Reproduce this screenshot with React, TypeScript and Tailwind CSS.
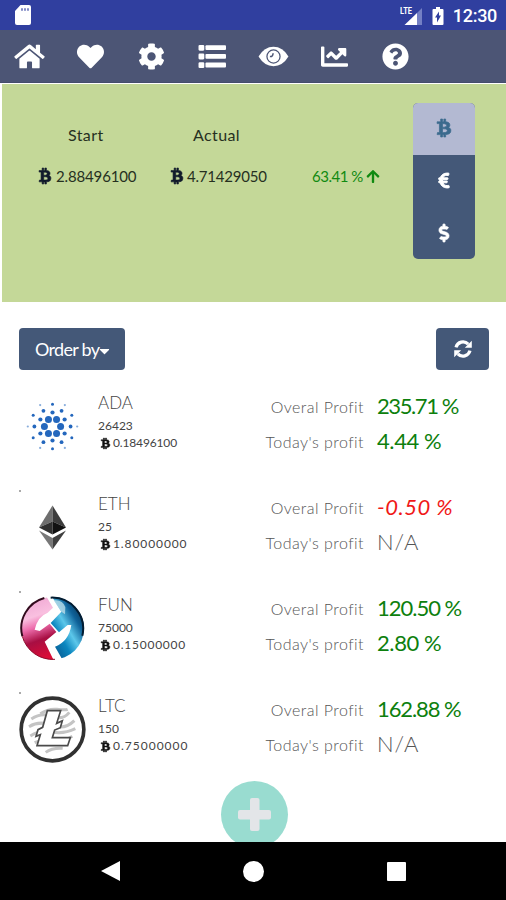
import React from 'react';
import {
  FaArrowUp,
  FaBtc,
  FaCaretDown,
  FaChartLine,
  FaCog,
  FaDollarSign,
  FaEuroSign,
  FaHeart,
  FaHome,
  FaQuestionCircle,
} from 'react-icons/fa';
import clsx from 'clsx';

type IconProps = { className?: string };

const ListIcon = ({ className }: IconProps) => (
  <svg className={className} viewBox="0 0 31 28" fill="currentColor">
    {[2, 11, 20].map((y) => (
      <g key={y}>
        <rect x="1" y={y} width="6" height="6" rx="1.2" />
        <rect x="8.2" y={y + 0.3} width="21.300" height="5" rx="1" />
      </g>
    ))}
  </svg>
);

const EyeIcon = ({ className }: IconProps) => (
  <svg className={className} viewBox="0 0 31 28">
    <path d="M0 14Q6 4 15.500 4T31 14Q25 24 15.500 24T0 14z" fill="currentColor" />
    <circle cx="15.500" cy="14" r="6.800" fill="none" stroke="#4c5575" strokeWidth="1.300" />
    <path d="M11.800 14q2.900.6 3.300-3.400" fill="none" stroke="#4c5575" strokeWidth="1.600" />
  </svg>
);

const RefreshIcon = ({ className }: IconProps) => (
  <svg className={className} viewBox="0 0 18 18" fill="none">
    <path d="M2 7.300A7.200 7.200 0 0 1 14.200 4.200M16 10.700A7.200 7.200 0 0 1 3.800 13.800" stroke="currentColor" strokeWidth="3.200" />
    <path d="M17.800.8V7.800H10.800zM.2 17.200V10.200H7.200z" fill="currentColor" />
  </svg>
);

const navIcons = [FaHome, FaHeart, FaCog, ListIcon, EyeIcon, FaChartLine, FaQuestionCircle];

const StatusBar = () => (
  <div className="h-[30px] bg-[#303f9f] flex items-center justify-between pl-[14px] pr-[9px] text-white">
    <svg className="w-[18px] h-[20px]" viewBox="0 0 18 20" fill="currentColor">
      <path d="M6.5 0H15a2 2 0 0 1 2 2v16a2 2 0 0 1-2 2H3a2 2 0 0 1-2-2V6z" />
      <path d="M8 3.2v2.5M11 3.2v2.5M14 3.2v2.5" stroke="#303f9f" strokeWidth="1.2" />
    </svg>
    <div className="flex items-center pt-px">
      <svg className="w-[22px] h-[20px]" viewBox="0 0 22 20">
        <path d="M22 2v17h-5V7z" fill="#7480c4" />
        <path d="M17 7v12H4.500z" fill="white" />
        <text x="0" y="8" fontSize="9" fontWeight="700" fill="white" textLength="12" lengthAdjust="spacingAndGlyphs" fontFamily="Roboto, sans-serif">LTE</text>
      </svg>
      <svg className="w-[12px] h-[20px] ml-[10px]" viewBox="0 0 12 20">
        <path d="M4 1h4v2h2.500q1 0 1 1v14q0 1-1 1h-9q-1 0-1-1V4q0-1 1-1H4z" fill="white" />
        <path d="M7 5.500v4h2L5 16.500v-5H3z" fill="#303f9f" />
      </svg>
      <span className="ml-[9px] text-[18px] leading-none font-medium font-['Roboto',sans-serif] tracking-[-0.300px]">12:30</span>
    </div>
  </div>
);

const NavBar = () => (
  <nav className="h-[53px] bg-[#4c5575] border-b border-[#454d6c] flex items-center text-white">
    {navIcons.map((Icon, i) => (
      <div key={i} className="w-[61px] shrink-0 flex justify-center pr-[2px]">
        <Icon className="w-[31px] h-[27px]" />
      </div>
    ))}
  </nav>
);

const Btc = ({ className }: IconProps) => (
  <FaBtc className={clsx('shrink-0 overflow-visible stroke-current [stroke-width:20]', className)} preserveAspectRatio="none" />
);

const Summary = () => (
  <section className="mt-px ml-[2px] h-[218px] bg-[#c4d898] flex text-[#26301f] text-[15px]">
    <div className="pl-[37px] pt-[41px] w-[132px] shrink-0 flex flex-col">
      <span className="leading-5 pl-[29px] text-[16px] tracking-[0.400px]">Start</span>
      <span className="mt-[21px] leading-5 flex items-center whitespace-nowrap">
        <Btc className="w-[12px] h-[16px] mr-[5px] text-[#111a2b]" />
        <span className="tracking-[-0.150px]">2.88496100</span>
      </span>
    </div>
    <div className="pl-[37px] pt-[41px] w-[142px] shrink-0 flex flex-col">
      <span className="leading-5 pl-[22px] text-[16px] tracking-[0.400px]">Actual</span>
      <span className="mt-[21px] leading-5 flex items-center whitespace-nowrap">
        <Btc className="w-[12px] h-[16px] mr-[4px] text-[#111a2b]" />
        <span className="tracking-[-0.200px]">4.71429050</span>
      </span>
    </div>
    <div className="pl-[36px] pt-[82px] w-[137px] shrink-0">
      <span className="leading-5 flex items-center text-[#118a11] whitespace-nowrap">
        <span className="tracking-[-0.500px]">63.41 %</span>
        <FaArrowUp className="w-[14px] h-[15px] ml-[3px] shrink-0" />
      </span>
    </div>
    <div className="mt-[19px] w-[62px] h-[156px] shrink-0 rounded-[5px] overflow-hidden bg-[#445878] text-white flex flex-col">
      <button className="h-[52px] bg-[#b3b9d2] text-[#3b6a8d] flex items-center justify-center pb-[2px]">
        <Btc className="w-[14px] h-[18px]" />
      </button>
      <button className="h-[52px] flex items-center justify-center pb-[2px]">
        <FaEuroSign className="w-[16px] h-[17px] overflow-visible stroke-current [stroke-width:30]" />
      </button>
      <button className="h-[52px] flex items-center justify-center pb-px">
        <FaDollarSign className="w-[16px] h-[18px] overflow-visible stroke-current [stroke-width:20]" />
      </button>
    </div>
  </section>
);

// rings of the Cardano mark: radius, dot size, start angle
const adaRings = [
  [8.1, 3.5, 0],
  [14, 2.1, 30],
  [18.1, 1.9, 0],
  [22.3, 1.5, 30],
  [24.7, 1.1, 0],
];

const AdaLogo = () => (
  <svg className="w-[67px] h-[67px]" viewBox="-33.500 -33.500 67 67" fill="#2467bd">
    {adaRings.map(([radius, dot, start]) =>
      [0, 60, 120, 180, 240, 300].map((a) => {
        const t = ((a + start) * Math.PI) / 180;
        return <circle key={`${radius}-${a}`} cx={radius * Math.cos(t)} cy={radius * Math.sin(t)} r={dot} opacity={dot < 1.2 ? 0.55 : 1} />;
      })
    )}
  </svg>
);

const EthLogo = () => (
  <svg className="w-[67px] h-[67px]" viewBox="-33.500 -33.500 67 67">
    <path d="M0-22-13.500 0 0-6z" fill="#6e6e6e" />
    <path d="M0-22 13.500 0 0-6z" fill="#3c3c3c" />
    <path d="M0-6-13.500 0 0 7z" fill="#303030" />
    <path d="M0-6 13.500 0 0 7z" fill="#111" />
    <path d="M-13.500 3 0 10.500V22z" fill="#777" />
    <path d="M13.500 3 0 10.500V22z" fill="#3f3f3f" />
  </svg>
);

const FunLogo = () => (
  <svg className="w-[67px] h-[67px]" viewBox="56 46 201 201">
    <defs>
      <linearGradient id="funPink" x1="0.300" y1="0" x2="0.500" y2="1">
        <stop offset="0" stopColor="#eda0cf" />
        <stop offset="0.350" stopColor="#f9c0e0" />
        <stop offset="0.500" stopColor="#ee6fae" />
        <stop offset="0.700" stopColor="#a80f43" />
        <stop offset="1" stopColor="#e00b35" />
      </linearGradient>
      <linearGradient id="funBlue" x1="1" y1="0" x2="0.200" y2="0.900">
        <stop offset="0.150" stopColor="#05263f" />
        <stop offset="0.400" stopColor="#0f6299" />
        <stop offset="0.600" stopColor="#5cc7ea" />
        <stop offset="0.780" stopColor="#0b86bf" />
        <stop offset="1" stopColor="#0a5f96" />
      </linearGradient>
      <clipPath id="funClip">
        <circle cx="157" cy="146" r="94" />
      </clipPath>
    </defs>
    <g clipPath="url(#funClip)">
      <path d="M50 40H132L158 84 142 99Q112 110 103 150L118 154 148 132 168 157 133 186 164 250H50z" fill="url(#funPink)" />
      <path d="M148 40H260V250H192L164 201Q205 186 213 136H202L176 158 151 130 183 96z" fill="url(#funBlue)" />
      <path d="M160 62Q186 58 195 82L194 104 183 96z" fill="#b9dce8" opacity="0.800" />
    </g>
    <path d="M132 55A94 94 0 0 0 66 170" fill="none" stroke="#320b1d" strokeWidth="6" />
    <path d="M151 54A93 93 0 0 1 246 168" fill="none" stroke="#031c31" strokeWidth="6" />
    <path d="M66 170A94 94 0 0 0 164 239" fill="none" stroke="#8e0a2b" strokeWidth="3" />
  </svg>
);

const LtcLogo = () => (
  <svg className="w-[67px] h-[67px]" viewBox="56 349 201 201">
    <circle cx="156.500" cy="449.500" r="94" fill="#fff" stroke="#313131" strokeWidth="11" />
    <g fill="none" stroke="#c4c4c4" strokeWidth="9">
      <path d="M120 402Q145 386 170 389T202 389" />
      <path d="M93 418Q123 397 155 410T207 398" />
      <path d="M86 441Q117 422 155 437T222 423" />
      <path d="M90 469Q120 450 155 457T225 447" />
      <path d="M103 489Q135 475 160 482T216 470" />
      <path d="M136 518Q155 504 187 506" />
    </g>
    <path
      d="M141 393H181L169 431 186 423 180 444 163 451 156 474H210L202 498H110L120 465 107 470 113 450 127 443z"
      fill="#fff"
      stroke="#4a4a4a"
      strokeWidth="5"
    />
  </svg>
);

interface Coin {
  symbol: string;
  amount: string;
  btc: string;
  btcClass: string;
  overall: string;
  overallClass: string;
  today: string;
  logo: React.FC;
}

const coins: Coin[] = [
  { symbol: 'ADA', amount: '26423', btc: '0.18496100', btcClass: 'tracking-[-0.150px]', overall: '235.71 %', overallClass: 'tracking-[-1.400px]', today: '4.44 %', logo: AdaLogo },
  { symbol: 'ETH', amount: '25', btc: '1.80000000', btcClass: 'tracking-[0.900px]', overall: '-0.50 %', overallClass: 'tracking-[0.500px]', today: 'N/A', logo: EthLogo },
  { symbol: 'FUN', amount: '75000', btc: '0.15000000', btcClass: 'tracking-[0.750px]', overall: '120.50 %', overallClass: 'tracking-[-1px]', today: '2.80 %', logo: FunLogo },
  { symbol: 'LTC', amount: '150', btc: '0.75000000', btcClass: 'tracking-[1px]', overall: '162.88 %', overallClass: 'tracking-[-1.100px]', today: 'N/A', logo: LtcLogo },
];

const profitClass = (value: string) =>
  clsx(
    'text-[22px] leading-[35px] whitespace-nowrap',
    value === 'N/A' && 'font-light text-[#555] tracking-[1px]',
    value.startsWith('-') && 'italic text-[#f01818]',
    value !== 'N/A' && !value.startsWith('-') && 'text-[#0d800d]',
    value.length === 6 && 'tracking-[-0.400px]'
  );

const CoinRow = ({ coin, first }: { coin: Coin; first: boolean }) => {
  const Logo = coin.logo;
  return (
    <li className="relative h-[101px] pl-[19px] flex">
      {!first && <span className="absolute left-[19px] top-[12px] w-[2px] h-[2px] bg-[#aaa]" />}
      <div className="w-[79px] pt-[16px]">
        <Logo />
      </div>
      <div className="w-[130px] pt-[15px] text-[#444]">
        <div className="text-[17px] leading-[22px] font-light text-[#444]">{coin.symbol}</div>
        <div className="mt-[4px] text-[12px] leading-4">{coin.amount}</div>
        <div className="text-[12px] leading-[18px] flex items-center">
          <Btc className="w-[9px] h-[11px] ml-[3px] mr-[3px] text-[#111]" />
          <span className={coin.btcClass}>{coin.btc}</span>
        </div>
      </div>
      <div className="w-[136px] pt-[12px] text-right text-[16px] text-[#555] font-light tracking-[0.450px]">
        <div className="leading-[35px]">Overal Profit</div>
        <div className="leading-[35px]">Today's profit</div>
      </div>
      <div className="pl-[13px] pt-[11px]">
        <div className={clsx(profitClass(coin.overall), coin.overallClass)}>{coin.overall}</div>
        <div className={profitClass(coin.today)}>{coin.today}</div>
      </div>
    </li>
  );
};

const SystemBar = () => (
  <div className="h-[58px] bg-black flex items-center justify-between pl-[101px] pr-[100px]">
    <svg className="w-[19px] h-[20px]" viewBox="0 0 19 20" fill="white">
      <path d="M19 0v20L0 10z" />
    </svg>
    <div className="w-[21px] h-[21px] rounded-full bg-white" />
    <div className="w-[19px] h-[19px] rounded-[1px] bg-white" />
  </div>
);

const App = () => (
  <div className="w-[506px] h-[900px] bg-white overflow-hidden flex flex-col font-['Lato',sans-serif]">
    <StatusBar />
    <NavBar />
    <Summary />
    <div className="pt-[26px] pl-[19px] pr-[17px] flex justify-between text-white">
      <button className="w-[106px] h-[42px] rounded-[4px] bg-[#445878] flex items-center pl-[16px] text-[18px] whitespace-nowrap">
        <span className="tracking-[-0.700px]">Order by</span>
        <FaCaretDown className="w-[11px] h-[16px] mt-[3px]" />
      </button>
      <button className="w-[53px] h-[42px] rounded-[4px] bg-[#445878] flex items-center justify-center">
        <RefreshIcon className="w-[18px] h-[18px]" />
      </button>
    </div>
    <ul className="mt-[7px]">
      {coins.map((coin, i) => (
        <CoinRow key={coin.symbol} coin={coin} first={i === 0} />
      ))}
    </ul>
    <div className="h-[61px] overflow-hidden flex justify-center pl-[3px] shrink-0">
      <button className="w-[67px] h-[67px] rounded-full bg-[#99dcd0] text-[#e3e5e8] flex items-center justify-center shrink-0">
        <svg className="w-[33px] h-[33px]" viewBox="0 0 33 33" fill="currentColor">
          <rect x="12" width="9.500" height="33" rx="2" />
          <rect y="12" width="33" height="9.500" rx="2" />
        </svg>
      </button>
    </div>
    <SystemBar />
  </div>
);

export default App;
